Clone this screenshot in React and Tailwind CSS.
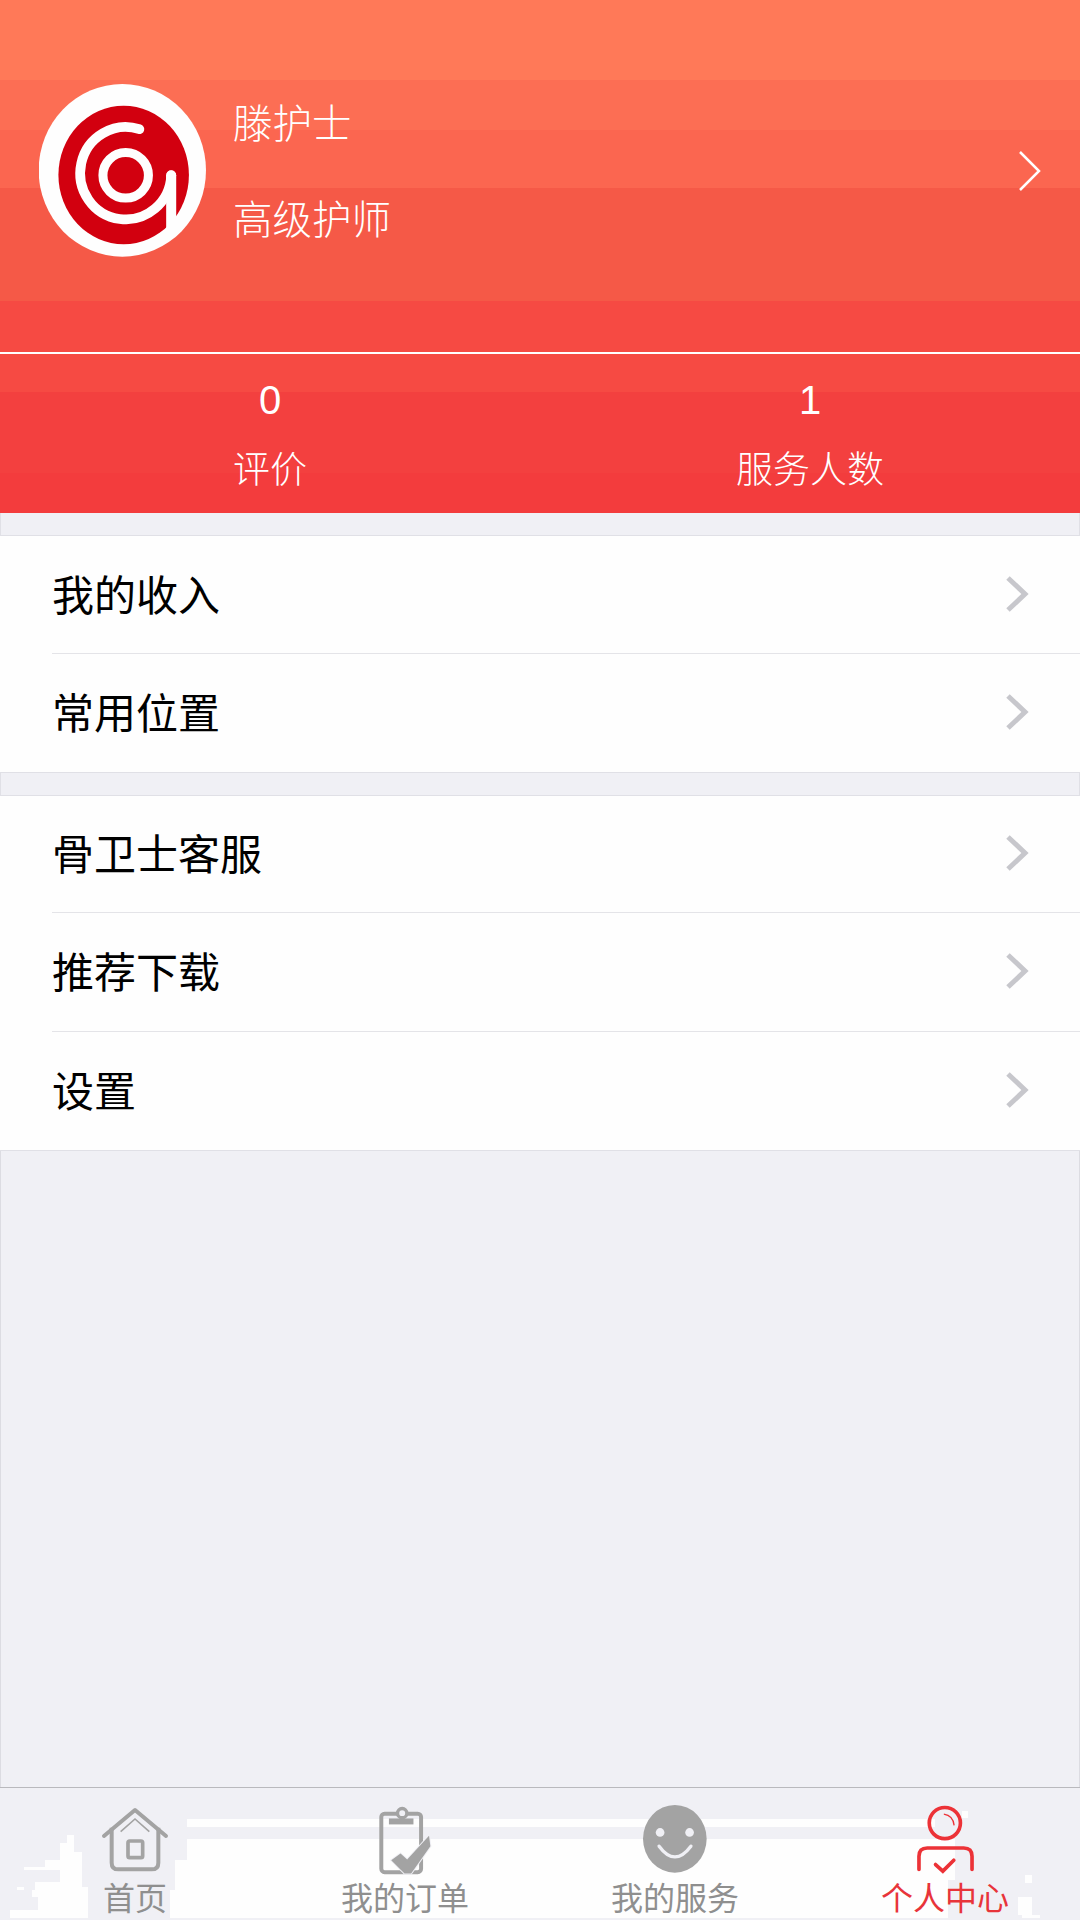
import React from "react";

const firstGroup = [
  { label: "我的收入", height: "h-[118px]" },
  { label: "常用位置", height: "h-[118px]" },
];
const secondGroup = [
  { label: "骨卫士客服", height: "h-[117px]" },
  { label: "推荐下载", height: "h-[119px]" },
  { label: "设置", height: "h-[118px]" },
];

const Chevron = () => (
  <svg className="mb-[2px]" width="24" height="38" viewBox="0 0 24 38" fill="none">
    <path d="M3 3 L20 19 L3 35" stroke="#c7c7cc" strokeWidth="5" />
  </svg>
);

const MenuGroup = ({ items }) => (
  <div className="bg-[#fefefe] border-y border-[#e0e0e6] pl-[52px]">
    {items.map((item, i) => (
      <div
        key={item.label}
        className={`${item.height} flex items-center justify-between pr-[51px] ${
          i < items.length - 1 ? "border-b border-[#e4e4e8]" : ""
        }`}
      >
        <span className="text-[42px] leading-[56px] pb-[4px] box-content text-black">{item.label}</span>
        <Chevron />
      </div>
    ))}
  </div>
);

const Logo = () => (
  <svg width="167" height="173" viewBox="58 43 499 517" className="shrink-0">
    <ellipse cx="307" cy="301" rx="250" ry="258" fill="#fefefe" />
    <ellipse cx="311" cy="315" rx="195" ry="207" fill="#d2000f" />
    <circle cx="317" cy="316" r="68" fill="none" stroke="#fefefe" strokeWidth="27" />
    <path
      d="M358 178 A136 138 0 1 0 453 316"
      fill="none"
      stroke="#fefefe"
      strokeWidth="29"
      strokeLinecap="round"
    />
    <rect x="438" y="316" width="30" height="170" fill="#fefefe" />
    <circle cx="453" cy="316" r="15" fill="#fefefe" />
  </svg>
);

const HomeIcon = () => (
  <svg width="70" height="66" viewBox="300 15 210 198" fill="none" stroke="#a3a3a3">
    <path d="M312 105 L405 27 L498 105" strokeWidth="12" strokeLinecap="round" strokeLinejoin="round" />
    <path d="M335 80 V185 Q335 205 355 205 H455 Q475 205 475 185 V80" strokeWidth="12" />
    <path d="M362 92 L405 54 L448 92" strokeWidth="5" />
    <rect x="384" y="120" width="44" height="50" rx="5" strokeWidth="11" />
  </svg>
);

const ClipboardIcon = () => (
  <svg width="63" height="72" viewBox="40 20 190 216" fill="none">
    <rect x="62" y="52" width="120" height="176" rx="10" stroke="#a3a3a3" strokeWidth="12" />
    <rect x="85" y="66" width="74" height="18" fill="#a3a3a3" />
    <circle cx="125" cy="50" r="14" stroke="#a3a3a3" strokeWidth="10" fill="#f0f0f5" />
    <path
      d="M92 192 L120 172 L140 190 L206 118 L210 150 L152 232 L132 232 Z"
      fill="#a3a3a3"
      stroke="#f0f0f5"
      strokeWidth="6"
      paintOrder="stroke"
    />
  </svg>
);

const SmileIcon = () => (
  <svg width="66" height="68" viewBox="297 103 191 203">
    <ellipse cx="392" cy="204" rx="95" ry="101" fill="#a3a3a3" />
    <circle cx="348" cy="185" r="13" fill="#f0f0f5" />
    <circle cx="436" cy="185" r="13" fill="#f0f0f5" />
    <path d="M345 226 Q392 290 440 226" fill="none" stroke="#f0f0f5" strokeWidth="10" strokeLinecap="round" />
  </svg>
);

const PersonIcon = () => (
  <svg width="63" height="72" viewBox="100 5 190 216" fill="none" stroke="#ec3237">
    <circle cx="193" cy="65" r="47" strokeWidth="11" />
    <path d="M190 38 Q218 42 221 72" strokeWidth="4" />
    <path d="M115 205 V165 Q115 140 140 140 H250 Q275 140 275 165 V205" strokeWidth="11" strokeLinecap="round" />
    <path d="M165 190 L187 210 L220 177" strokeWidth="11" strokeLinecap="round" />
  </svg>
);

const tabs = [
  { label: "首页", icon: <HomeIcon /> },
  { label: "我的订单", icon: <ClipboardIcon /> },
  { label: "我的服务", icon: <SmileIcon /> },
  { label: "个人中心", icon: <PersonIcon />, active: true },
];

const TabBar = () => (
  <div className="relative h-[133px] shrink-0 border-t border-[#b9b9bd] bg-[#f0f0f5] grid grid-cols-4 pt-[15px]">
    {/* washed out white patches that sit behind the tabs in the picture */}
    <svg className="absolute left-0 top-0" width="1080" height="132" viewBox="0 1788 1080 132" fill="#fefefe">
      <path d="M67 1835 H74 V1852 H82 V1887 H88 V1918 H10 V1910 H38 V1897 H32 V1890 H35 V1882 H60 V1870 H24 V1867 H45 V1860 H60 V1843 H67 Z" />
      <rect x="17" y="1887" width="7" height="3" />
      <rect x="187" y="1819" width="748" height="8" />
      <rect x="962" y="1811" width="6" height="7" />
      <path d="M187 1839 H955 V1880 H948 V1918 H170 V1890 H175 V1860 H187 Z" />
      <rect x="1025" y="1875" width="7" height="8" />
      <rect x="1018" y="1897" width="14" height="18" />
      <rect x="1022" y="1915" width="18" height="3" />
    </svg>
    {tabs.map((tab) => (
      <div key={tab.label} className="relative flex flex-col items-center">
        <div className="h-[72px] flex items-center justify-center">{tab.icon}</div>
        <span
          className={`mt-[3px] text-[32px] leading-[36px] ${
            tab.active ? "text-[#e8343a]" : "text-[#8f8f8f]"
          }`}
        >
          {tab.label}
        </span>
      </div>
    ))}
  </div>
);

export default function App() {
  return (
    <div className="w-[1080px] h-[1920px] flex flex-col overflow-hidden bg-[#f0f0f5] font-['Noto_Sans_CJK_SC','Noto_Sans',sans-serif]">
      <header className="h-[513px] shrink-0 text-white bg-[linear-gradient(to_bottom,#ff7958_0,#ff7958_80px,#fc6e54_80px,#fc6e54_130px,#fb6650_130px,#fb6650_188px,#f55947_188px,#f55947_301px,#f64a43_301px,#f64a43_392px,#f3403f_392px,#f3403f_473px,#f33c3d_473px,#f33c3d_513px)]">
        <div className="h-[354px] border-b-2 border-white flex items-start pt-[84px] pl-[39px] pr-[39px]">
          <Logo />
          <div className="ml-[27px] mt-[13px] flex flex-col gap-[48px] text-[39.5px] leading-[48px] font-light">
            <span>滕护士</span>
            <span>高级护师</span>
          </div>
          <svg className="ml-auto mt-[67px]" width="22" height="40" viewBox="0 0 22 40" fill="none">
            <path d="M1 1 L20 20 L1 39" stroke="#fff" strokeWidth="2.5" />
          </svg>
        </div>
        <div className="grid grid-cols-2 text-center pt-[24px] font-light">
          <div className="flex flex-col items-center">
            <span className="text-[40px] leading-[44px] font-['Liberation_Sans',sans-serif]">0</span>
            <span className="mt-[22px] text-[37px] leading-[46px]">评价</span>
          </div>
          <div className="flex flex-col items-center">
            <span className="text-[40px] leading-[44px] font-['Liberation_Sans',sans-serif]">1</span>
            <span className="mt-[22px] text-[37px] leading-[46px]">服务人数</span>
          </div>
        </div>
      </header>
      <div className="h-[22px] shrink-0 border-x border-[#e0e0e6]" />
      <MenuGroup items={firstGroup} />
      <div className="h-[22px] shrink-0 border-x border-[#e0e0e6]" />
      <MenuGroup items={secondGroup} />
      <div className="flex-1 border-x border-[#dcdce2]" />
      <TabBar />
    </div>
  );
}
